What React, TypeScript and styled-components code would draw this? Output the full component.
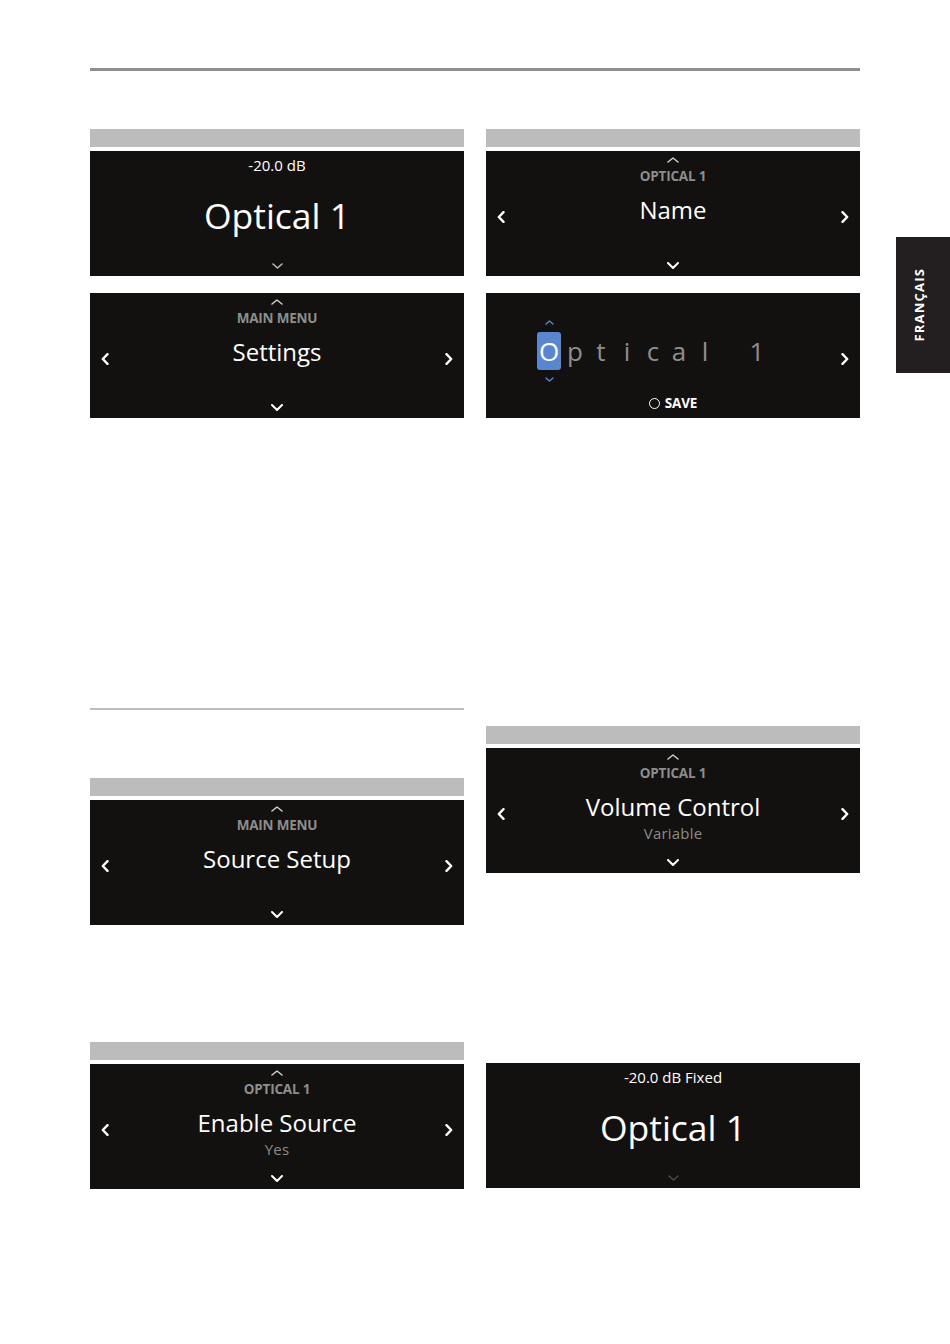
import React from 'react';
import styled, { createGlobalStyle } from 'styled-components';

const Global = createGlobalStyle`
  html, body { margin: 0; padding: 0; background: #ffffff; }
  body { font-family: "Open Sans", "Noto Sans", sans-serif; }
`;

const Page = styled.div`
  width: 950px;
  height: 1344px;
  display: flex;
  overflow: hidden;
`;

const Content = styled.main`
  margin-left: 90px;
  width: 770px;
  padding-top: 68px;
  display: flex;
  flex-direction: column;
`;

const Rule = styled.div`
  height: 3px;
  background: #8f8f8f;
`;

const TopGrid = styled.div`
  display: grid;
  grid-template-columns: 374px 374px;
  column-gap: 22px;
  row-gap: 17px;
  margin-top: 58px;
`;

const LowerGrid = styled.div`
  display: grid;
  grid-template-columns: 374px 374px;
  column-gap: 22px;
  align-items: start;
  margin-top: 290px;
`;

const Column = styled.div`
  display: flex;
  flex-direction: column;
`;

const ThinRule = styled.div`
  height: 2px;
  background: #bdbdbd;
`;

const Panel = styled.section<{ $mt?: number }>`
  display: flex;
  flex-direction: column;
  gap: 4px;
  margin-top: ${p => p.$mt ?? 0}px;
`;

const Bar = styled.div`
  height: 18px;
  background: #bcbcbc;
`;

const Screen = styled.div`
  height: 125px;
  background: #13110f;
  color: #ffffff;
  display: grid;
  grid-template-columns: 30px 1fr 30px;
`;

const Side = styled.div`
  display: flex;
  align-items: center;
  justify-content: center;
  padding-top: 6px;
`;

const Center = styled.div`
  display: flex;
  flex-direction: column;
  align-items: center;
  min-width: 0;
`;

const Label = styled.div`
  margin-top: 5px;
  font-size: 13.5px;
  line-height: 16px;
  font-weight: 700;
  color: #8d8d8d;
  letter-spacing: -0.2px;
  white-space: nowrap;
`;

const Title = styled.div`
  margin-top: 11px;
  font-size: 24px;
  line-height: 30px;
  color: #ffffff;
  white-space: nowrap;
`;

const Sub = styled.div`
  margin-top: 1px;
  font-size: 15px;
  line-height: 20px;
  color: #8a8a8a;
  letter-spacing: 0.2px;
`;

const Status = styled.div`
  margin-top: 4px;
  font-size: 15px;
  line-height: 20px;
  color: #ffffff;
  white-space: nowrap;
`;

const BigName = styled.div`
  margin-top: 18px;
  font-size: 35.5px;
  line-height: 44px;
  color: #ffffff;
  white-space: nowrap;
`;

const Bottom = styled.div`
  margin-top: auto;
  margin-bottom: 7px;
  display: flex;
`;

const Top = styled.div`
  margin-top: 6px;
  display: flex;
`;

/* edit screen */
const EditCenter = styled.div`
  display: flex;
  flex-direction: column;
  align-items: center;
`;

const Letters = styled.div`
  align-self: flex-start;
  margin-left: 20px;
  display: flex;
  align-items: center;
`;

const CursorCell = styled.div`
  width: 26px;
  padding-top: 27px;
  display: flex;
  flex-direction: column;
  align-items: center;
  gap: 7px;
`;

const CursorBox = styled.div`
  width: 24px;
  height: 38px;
  border-radius: 3px;
  background: #5a86d0;
  display: flex;
  align-items: center;
  justify-content: center;
  font-size: 26px;
  color: #ffffff;
`;

const Letter = styled.div`
  width: 26px;
  height: 38px;
  margin-top: 26px;
  display: flex;
  align-items: center;
  justify-content: center;
  font-size: 26px;
  color: #8e8e8e;
`;

const SaveRow = styled.div`
  margin-top: 14px;
  display: flex;
  align-items: center;
  gap: 5px;
  font-size: 13.5px;
  line-height: 15px;
  font-weight: 700;
  color: #ffffff;
  letter-spacing: -0.2px;
`;

const Ring = styled.span`
  width: 9px;
  height: 9px;
  border: 1.7px solid #ffffff;
  border-radius: 50%;
`;

/* side tab */
const Rail = styled.aside`
  margin-left: 36px;
  width: 54px;
  display: flex;
  flex-direction: column;
`;

const Tab = styled.div`
  margin-top: 237px;
  height: 136px;
  background: #231f20;
  display: flex;
  align-items: center;
  justify-content: center;
  padding-right: 8px;
`;

const TabText = styled.span`
  writing-mode: vertical-rl;
  transform: rotate(180deg);
  font-family: "Open Sans", "Noto Sans", sans-serif;
  font-weight: 700;
  font-size: 13px;
  letter-spacing: 1.2px;
  color: #ffffff;
`;

type Dir = 'up' | 'down' | 'left' | 'right';

const Chevron: React.FC<{ dir: Dir; color?: string; w?: number; h?: number; sw?: number }> = ({
  dir,
  color = '#ffffff',
  w,
  h,
  sw = 2,
}) => {
  if (dir === 'left' || dir === 'right') {
    const W = w ?? 8;
    const H = h ?? 12;
    const d = dir === 'left' ? `M${W - 1.5} 1.2 L1.8 ${H / 2} L${W - 1.5} ${H - 1.2}` : `M1.5 1.2 L${W - 1.8} ${H / 2} L1.5 ${H - 1.2}`;
    return (
      <svg width={W} height={H} viewBox={`0 0 ${W} ${H}`}>
        <path d={d} fill="none" stroke={color} strokeWidth={sw} strokeLinecap="round" strokeLinejoin="round" />
      </svg>
    );
  }
  const W = w ?? 12;
  const H = h ?? 7;
  const d = dir === 'up' ? `M1 ${H - 1} L${W / 2} 1 L${W - 1} ${H - 1}` : `M1 1 L${W / 2} ${H - 1} L${W - 1} 1`;
  return (
    <svg width={W} height={H} viewBox={`0 0 ${W} ${H}`}>
      <path d={d} fill="none" stroke={color} strokeWidth={sw} strokeLinecap="round" strokeLinejoin="round" />
    </svg>
  );
};

const MenuScreen: React.FC<{ label: string; title: string; sub?: string }> = ({ label, title, sub }) => (
  <Screen>
    <Side>
      <Chevron dir="left" sw={2.4} />
    </Side>
    <Center>
      <Top>
        <Chevron dir="up" color="#cfcfcf" sw={1.5} h={6} />
      </Top>
      <Label>{label}</Label>
      <Title>{title}</Title>
      {sub && <Sub>{sub}</Sub>}
      <Bottom>
        <Chevron dir="down" sw={2} />
      </Bottom>
    </Center>
    <Side>
      <Chevron dir="right" sw={2.4} />
    </Side>
  </Screen>
);

const StatusScreen: React.FC<{ status: string; name: string; chevron: string }> = ({ status, name, chevron }) => (
  <Screen>
    <Side />
    <Center>
      <Status>{status}</Status>
      <BigName>{name}</BigName>
      <Bottom>
        <Chevron dir="down" color={chevron} sw={1.6} w={11} h={6} />
      </Bottom>
    </Center>
    <Side />
  </Screen>
);

const EditScreen: React.FC = () => {
  const rest = ['p', 't', 'i', 'c', 'a', 'l', '\u00a0', '1'];
  return (
    <Screen>
      <Side />
      <EditCenter>
        <Letters>
          <CursorCell>
            <Chevron dir="up" color="#5a86d0" w={9} h={5} sw={1.4} />
            <CursorBox>O</CursorBox>
            <Chevron dir="down" color="#5a86d0" w={9} h={5} sw={1.4} />
          </CursorCell>
          {rest.map((c, i) => (
            <Letter key={i}>{c}</Letter>
          ))}
        </Letters>
        <SaveRow>
          <Ring />
          SAVE
        </SaveRow>
      </EditCenter>
      <Side>
        <Chevron dir="right" sw={2.4} />
      </Side>
    </Screen>
  );
};

export default function App() {
  return (
    <>
      <Global />
      <Page>
        <Content>
          <Rule />
          <TopGrid>
            <Panel>
              <Bar />
              <StatusScreen status="-20.0 dB" name="Optical 1" chevron="#b8b8b8" />
            </Panel>
            <Panel>
              <Bar />
              <MenuScreen label="OPTICAL 1" title="Name" />
            </Panel>
            <Panel>
              <MenuScreen label="MAIN MENU" title="Settings" />
            </Panel>
            <Panel>
              <EditScreen />
            </Panel>
          </TopGrid>
          <LowerGrid>
            <Column>
              <ThinRule />
              <Panel $mt={68}>
                <Bar />
                <MenuScreen label="MAIN MENU" title="Source Setup" />
              </Panel>
              <Panel $mt={117}>
                <Bar />
                <MenuScreen label="OPTICAL 1" title="Enable Source" sub="Yes" />
              </Panel>
            </Column>
            <Column>
              <Panel $mt={18}>
                <Bar />
                <MenuScreen label="OPTICAL 1" title="Volume Control" sub="Variable" />
              </Panel>
              <Panel $mt={190}>
                <StatusScreen status="-20.0 dB Fixed" name="Optical 1" chevron="#4a4a4a" />
              </Panel>
            </Column>
          </LowerGrid>
        </Content>
        <Rail>
          <Tab>
            <TabText>FRANÇAIS</TabText>
          </Tab>
        </Rail>
      </Page>
    </>
  );
}
